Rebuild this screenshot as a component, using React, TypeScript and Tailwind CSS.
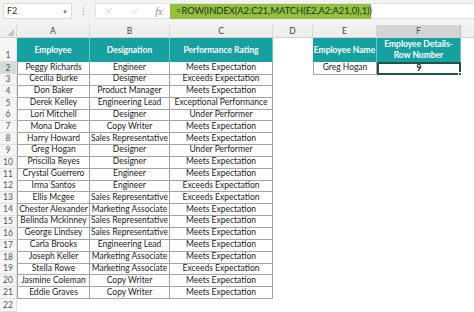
import { X, Check } from 'lucide-react'

const rows = [
  ['Peggy Richards', 'Engineer', 'Meets Expectation'],
  ['Cecilia Burke', 'Designer', 'Exceeds Expectation'],
  ['Don Baker', 'Product Manager', 'Meets Expectation'],
  ['Derek Kelley', 'Engineering Lead', 'Exceptional Performance'],
  ['Lori Mitchell', 'Designer', 'Under Performer'],
  ['Mona Drake', 'Copy Writer', 'Meets Expectation'],
  ['Harry Howard', 'Sales Representative', 'Meets Expectation'],
  ['Greg Hogan', 'Designer', 'Under Performer'],
  ['Priscilla Reyes', 'Designer', 'Meets Expectation'],
  ['Crystal Guerrero', 'Engineer', 'Meets Expectation'],
  ['Irma Santos', 'Engineer', 'Exceeds Expectation'],
  ['Ellis Mcgee', 'Sales Representative', 'Exceeds Expectation'],
  ['Chester Alexander', 'Marketing Associate', 'Meets Expectation'],
  ['Belinda Mckinney', 'Sales Representative', 'Meets Expectation'],
  ['George Lindsey', 'Sales Representative', 'Meets Expectation'],
  ['Carla Brooks', 'Engineering Lead', 'Meets Expectation'],
  ['Joseph Keller', 'Marketing Associate', 'Meets Expectation'],
  ['Stella Rowe', 'Marketing Associate', 'Exceeds Expectation'],
  ['Jasmine Coleman', 'Copy Writer', 'Meets Expectation'],
  ['Eddie Graves', 'Copy Writer', 'Meets Expectation'],
]

const grid = 'grid grid-cols-[17px_73px_80px_103px_40px_64px_84px_1fr]'

function RowNum({ n, active = false }: { n: number; active?: boolean }) {
  return (
    <div
      className={`flex items-end justify-center pb-px leading-[10px] border-r border-b border-[#e1e1e1] text-[8.5px] ${
        active ? 'bg-[#d9d9d9] text-[#1f6b45]' : 'bg-[#f6f6f6] text-[#555]'
      }`}
    >
      {n}
    </div>
  )
}

function Head({ children }: { children: React.ReactNode }) {
  return (
    <div className="flex items-center justify-center text-center leading-[11px] bg-[#17a0a0] text-white font-bold text-[8.5px] border-r border-[#6fc4c4]">
      {children}
    </div>
  )
}

function Cell({ children, first = false }: { children: React.ReactNode; first?: boolean }) {
  return (
    <div
      className={`flex items-center justify-center pb-px whitespace-nowrap overflow-hidden leading-[9px] text-[8.5px] text-[#222] border-r border-b border-[#a3a3a3] ${
        first ? 'border-l' : ''
      }`}
    >
      {children}
    </div>
  )
}

export default function App() {
  return (
    <div className="w-[474px] h-[312px] overflow-hidden bg-white font-['Lato',sans-serif]">
      {/* formula bar */}
      <div className="h-[25px] bg-[#f3f3f3] flex items-start pt-[3px]">
        <div className="ml-[3px] w-[69px] h-[16px] bg-white border border-[#dcdcdc] flex items-center justify-between px-[3px] text-[9px] text-[#333]">
          <span>F2</span>
          <span className="text-[6px] text-[#777]">▼</span>
        </div>
        <div className="w-[23px] h-[16px] flex flex-col items-center justify-center gap-[1.5px]">
          <span className="w-[1.5px] h-[1.5px] bg-[#aaa] rounded-full" />
          <span className="w-[1.5px] h-[1.5px] bg-[#aaa] rounded-full" />
          <span className="w-[1.5px] h-[1.5px] bg-[#aaa] rounded-full" />
        </div>
        <div className="flex-1 h-[16px] bg-white border-y border-l border-[#e2e2e2] flex items-center">
          <div className="w-[74px] flex items-center justify-around text-[#b8b8b8]">
            <X size={11} strokeWidth={1.2} />
            <Check size={11} strokeWidth={1.2} />
            <span className="font-['Liberation_Serif',serif] italic text-[10px] text-[#888]">fx</span>
          </div>
          <div className="w-[201px] h-[15px] bg-[#92c13e] flex items-center pl-[6px] text-[9.3px] leading-none text-[#2a2a2a] whitespace-nowrap">
            =ROW(INDEX(A2:C21,MATCH(E2,A2:A21,0),1))
          </div>
        </div>
      </div>

      {/* column headers */}
      <div className={`${grid} h-[13px] bg-[#efefef] border-b border-[#cfcfcf] text-[8.5px] text-[#444]`}>
        <div className="relative border-r border-[#d6d6d6]">
          <span className="absolute right-[2px] bottom-[2px] w-0 h-0 border-l-[7px] border-l-transparent border-b-[7px] border-b-[#c4c4c4]" />
        </div>
        {['A', 'B', 'C', 'D', 'E'].map((c) => (
          <div key={c} className="flex items-center justify-center border-r border-[#d6d6d6]">
            {c}
          </div>
        ))}
        <div className="flex items-center justify-center border-r border-[#bdbdbd] bg-[#d4d4d4] text-[#555]">F</div>
        <div />
      </div>

      {/* row 1 */}
      <div className={`${grid} h-[24px]`}>
        <RowNum n={1} />
        <Head>Employee</Head>
        <Head>Designation</Head>
        <Head>Performance Rating</Head>
        <div />
        <Head>Employee Name</Head>
        <Head>
          Employee Details-
          <br />
          Row Number
        </Head>
        <div />
      </div>

      {rows.map((r, i) => (
        <div key={i} className={`${grid} h-[11.85px]`}>
          <RowNum n={i + 2} active={i === 0} />
          <Cell first>{r[0]}</Cell>
          <Cell>{r[1]}</Cell>
          <Cell>{r[2]}</Cell>
          <div />
          {i === 0 ? (
            <>
              <Cell first>Greg Hogan</Cell>
              <div className="relative flex items-center justify-center border-2 border-[#1d5646]">
                <span className="leading-[9px] text-[8.5px] font-bold text-[#111]">9</span>
                <span className="absolute -right-[3px] -bottom-[3px] w-[4px] h-[4px] bg-[#1d5646] border border-white" />
              </div>
            </>
          ) : (
            <>
              <div />
              <div />
            </>
          )}
          <div />
        </div>
      ))}

      <div className={`${grid} h-[13px]`}>
        <RowNum n={22} />
      </div>
    </div>
  )
}
